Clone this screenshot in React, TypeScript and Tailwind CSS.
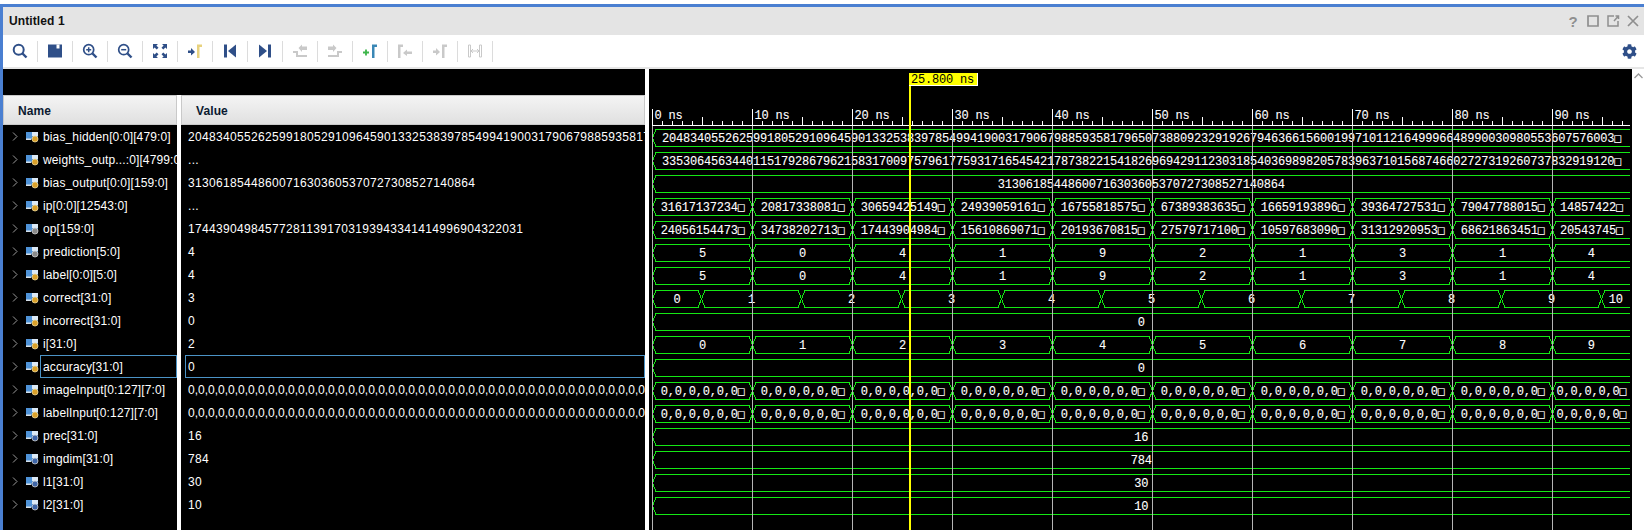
import React from 'react';
import { FaCog } from 'react-icons/fa';

const NAVY = '#2f4f88';
const OFF = '#c9c9c9';

type Kind = 'lock' | 'out' | 'param';

interface Sig {
  name: string;
  value: string;
  kind: Kind;
  active?: boolean;
}

const signals: Sig[] = [
  { name: 'bias_hidden[0:0][479:0]', value: '204834055262599180529109645901332538397854994190031790679885935817965073880923291926794636615600199710112164999664899003098055360757600', kind: 'lock' },
  { name: 'weights_outp...:0][4799:0]', value: '...', kind: 'lock' },
  { name: 'bias_output[0:0][159:0]', value: '31306185448600716303605370727308527140864', kind: 'lock' },
  { name: 'ip[0:0][12543:0]', value: '...', kind: 'lock' },
  { name: 'op[159:0]', value: '174439049845772811391703193943341414996904322031', kind: 'out' },
  { name: 'prediction[5:0]', value: '4', kind: 'out' },
  { name: 'label[0:0][5:0]', value: '4', kind: 'lock' },
  { name: 'correct[31:0]', value: '3', kind: 'lock' },
  { name: 'incorrect[31:0]', value: '0', kind: 'lock' },
  { name: 'i[31:0]', value: '2', kind: 'lock' },
  { name: 'accuracy[31:0]', value: '0', kind: 'lock', active: true },
  { name: 'imageInput[0:127][7:0]', value: '0,0,0,0,0,0,0,0,0,0,0,0,0,0,0,0,0,0,0,0,0,0,0,0,0,0,0,0,0,0,0,0,0,0,0,0,0,0,0,0,0,0,0,0,0,0,0,0,0,0,0,0,0,0', kind: 'lock' },
  { name: 'labelInput[0:127][7:0]', value: '0,0,0,0,0,0,0,0,0,0,0,0,0,0,0,0,0,0,0,0,0,0,0,0,0,0,0,0,0,0,0,0,0,0,0,0,0,0,0,0,0,0,0,0,0,0,0,0,0,0,0,0,0,0', kind: 'lock' },
  { name: 'prec[31:0]', value: '16', kind: 'param' },
  { name: 'imgdim[31:0]', value: '784', kind: 'param' },
  { name: 'l1[31:0]', value: '30', kind: 'param' },
  { name: 'l2[31:0]', value: '10', kind: 'param' },
];

const X0 = 652.5;
const XEND = 1630;
const tens = [0, 1, 2, 3, 4, 5, 6, 7, 8, 9].map((i) => X0 + i * 100);
const decade = [...tens, XEND];
const offset = [X0, ...tens.map((x) => x + 49), XEND];
const whole = [X0, XEND];
const BOX = '\u25A1';
const zeros = `0,0,0,0,0,0${BOX}`;
const zerosEnd = `0,0,0,0,0${BOX}`;

interface Wave {
  edges: number[];
  labels: string[];
  startAt?: number;
}

const waves: Wave[] = [
  { edges: whole, startAt: 662, labels: [`2048340552625991805291096459013325383978549941900317906798859358179650738809232919267946366156001997101121649996648990030980553607576003${BOX}`] },
  { edges: whole, startAt: 662, labels: [`3353064563440115179286796215831700975796177593171654542178738221541826969429112303185403698982057839637101568746602727319260737832919120${BOX}`] },
  { edges: whole, labels: ['31306185448600716303605370727308527140864'] },
  { edges: decade, labels: ['31617137234', '20817338081', '30659425149', '24939059161', '16755818575', '67389383635', '16659193896', '39364727531', '79047788015', '14857422'].map((s) => s + BOX) },
  { edges: decade, labels: ['24056154473', '34738202713', '17443904984', '15610869071', '20193670815', '27579717100', '10597683090', '31312920953', '68621863451', '20543745'].map((s) => s + BOX) },
  { edges: decade, labels: ['5', '0', '4', '1', '9', '2', '1', '3', '1', '4'] },
  { edges: decade, labels: ['5', '0', '4', '1', '9', '2', '1', '3', '1', '4'] },
  { edges: offset, labels: ['0', '1', '2', '3', '4', '5', '6', '7', '8', '9', '10'] },
  { edges: whole, labels: ['0'] },
  { edges: decade, labels: ['0', '1', '2', '3', '4', '5', '6', '7', '8', '9'] },
  { edges: whole, labels: ['0'] },
  { edges: decade, labels: [zeros, zeros, zeros, zeros, zeros, zeros, zeros, zeros, zeros, zerosEnd] },
  { edges: decade, labels: [zeros, zeros, zeros, zeros, zeros, zeros, zeros, zeros, zeros, zerosEnd] },
  { edges: whole, labels: ['16'] },
  { edges: whole, labels: ['784'] },
  { edges: whole, labels: ['30'] },
  { edges: whole, labels: ['10'] },
];

const Glass = ({ mark }: { mark?: 'plus' | 'minus' }) => (
  <svg width="16" height="16" viewBox="0 0 16 16" fill="none" stroke={NAVY}>
    <circle cx="6.7" cy="6.7" r="5" strokeWidth={mark ? 1.7 : 2} />
    <path d="M10.5 10.5 14.5 14.5" strokeWidth="2.4" />
    {mark && <path d={mark === 'plus' ? 'M4.2 6.7h5M6.7 4.2v5' : 'M4.2 6.7h5'} strokeWidth="1.5" />}
  </svg>
);

const Save = () => (
  <svg width="16" height="16" viewBox="0 0 16 16">
    <path d="M1 1.5h14v13H1z" fill={NAVY} />
    <path d="M9.5 1.5h3v4h-3z" fill="#fff" />
  </svg>
);

const Fit = () => (
  <svg width="16" height="16" viewBox="0 0 16 16" fill={NAVY}>
    <path d="M1 1h5L4.4 2.6 6.5 4.7 4.7 6.5 2.6 4.4 1 6z" />
    <path d="M15 1h-5l1.6 1.6-2.1 2.1 1.8 1.8 2.1-2.1L15 6z" />
    <path d="M1 15h5l-1.6-1.6 2.1-2.1-1.8-1.8-2.1 2.1L1 10z" />
    <path d="M15 15h-5l1.6-1.6-2.1-2.1 1.8-1.8 2.1 2.1L15 10z" />
  </svg>
);

// marker bracket with a small arrow in front of it
const Marker = ({ arrow, bar, add }: { arrow: string; bar: string; add?: boolean }) => (
  <svg width="16" height="16" viewBox="0 0 16 16">
    {add ? (
      <path d="M1 9.5h6M4 6.5v6" stroke={arrow} strokeWidth="1.8" />
    ) : (
      <path d="M1 7.5h3V5l4 4-4 3.5V10H1z" fill={arrow} />
    )}
    <path d="M10 15V1.5h5V4h-2.5v11z" fill={bar} />
  </svg>
);

const MarkerBack = () => (
  <svg width="16" height="16" viewBox="0 0 16 16" fill={OFF}>
    <path d="M1 15V1.5h5V4H3.5v11z" />
    <path d="M15 8.5h-5V6.5L6 10l4 3v-2h5z" />
  </svg>
);

const Jump = ({ flip }: { flip?: boolean }) => (
  <svg width="16" height="16" viewBox="0 0 16 16" fill={NAVY} className={flip ? '-scale-x-100' : ''}>
    <path d="M2 1.5h3v13H2z" />
    <path d="M14 1.5v13L6 8z" />
  </svg>
);

const Step = ({ flip }: { flip?: boolean }) => (
  <svg width="16" height="16" viewBox="0 0 16 16" fill={OFF} className={flip ? '-scale-x-100' : ''}>
    <path d="M1 8h5v4h9v2H4v-4H1z" />
    <path d="M6.500 5 10 1.500v2h5V7h-5v2z" />
  </svg>
);

const Span = () => (
  <svg width="16" height="16" viewBox="0 0 16 16" fill="none" stroke={OFF}>
    <path d="M1.500 2v12h2V2zM12.500 2v12h2V2z" />
    <path d="M4 8h8M6 6 4 8l2 2M10 6l2 2-2 2" />
  </svg>
);

const tools = [
  <Glass />,
  <Save />,
  <Glass mark="plus" />,
  <Glass mark="minus" />,
  <Fit />,
  <Marker arrow={NAVY} bar="#e8d27e" />,
  <Jump />,
  <Jump flip />,
  <Step />,
  <Step flip />,
  <Marker add arrow="#3cb54a" bar="#3a87b5" />,
  <MarkerBack />,
  <Marker arrow={OFF} bar={OFF} />,
  <Span />,
];

const SigIcon = ({ kind }: { kind: Kind }) => (
  <svg width="13" height="13" viewBox="0 0 13 13" className="shrink-0">
    <path d="M0 2h12v7.500H0z" fill="#4f93d8" />
    <path d="M6 2h6v4H6z" fill="#dbe9f6" />
    <path d="M0 8.500h5V10H0z" fill="#d5e0ea" />
    <circle
      cx="9"
      cy="9"
      r="3"
      fill={kind === 'lock' ? '#d9a02a' : kind === 'out' ? '#8a8a8a' : '#3f66a8'}
      stroke={kind === 'lock' ? '#efd999' : '#cfcfcf'}
      strokeWidth=".8"
    />
  </svg>
);

const SignalName = ({ sig }: { sig: Sig }) => (
  <div className="flex h-[23px] items-center overflow-hidden whitespace-nowrap">
    <svg width="6" height="9" viewBox="0 0 6 9" fill="none" stroke="#9a9a9a" className="ml-[9px] mr-[8px] shrink-0">
      <path d="M1 .5l4 4-4 4" />
    </svg>
    <SigIcon kind={sig.kind} />
    <div className={`ml-[1px] flex h-full min-w-0 flex-1 items-center pt-[1px] tracking-[0.13px] ${sig.active ? 'border border-[#4b93c6] pl-[2px]' : 'pl-[3px]'}`}>
      {sig.name}
    </div>
  </div>
);

const WaveLabel = ({ label, x, y, anchor }: { label: string; x: number; y: number; anchor: 'start' | 'middle' }) => {
  const boxed = label.endsWith(BOX);
  return (
    <text
      x={x}
      y={y}
      textAnchor={anchor}
      stroke="#fff"
      strokeWidth=".1"
      className="fill-white font-['Liberation_Mono',monospace] text-[12px] tracking-[-0.2px]"
    >
      {boxed ? label.slice(0, -1) : label}
      {boxed && <tspan className="font-['DejaVu_Sans_Mono',monospace] text-[11.500px]">{BOX}</tspan>}
    </text>
  );
};

const WaveRow = ({ wave, top }: { wave: Wave; top: number }) => {
  const t = top + 0.5;
  const b = t + 17;
  const m = t + 8.5;
  return (
    <g>
      {wave.labels.map((label, i) => {
        const x0 = wave.edges[i];
        const x1 = wave.edges[i + 1];
        const open = x1 >= XEND;
        const d = open
          ? `M${x1} ${t}L${x0 + 3.5} ${t}L${x0} ${m}L${x0 + 3.5} ${b}L${x1} ${b}`
          : `M${x0} ${m}L${x0 + 3.5} ${t}L${x1 - 3.5} ${t}L${x1} ${m}L${x1 - 3.5} ${b}L${x0 + 3.5} ${b}Z`;
        return (
          <g key={i}>
            <path d={d} fill="none" stroke="#14e814" shapeRendering="crispEdges" />
            <WaveLabel label={label} x={wave.startAt ?? (x0 + x1) / 2} y={top + 13} anchor={wave.startAt ? 'start' : 'middle'} />
          </g>
        );
      })}
    </g>
  );
};

const WaveCanvas = () => {
  const ticks = Array.from({ length: 98 }, (_, i) => i);
  return (
    <svg width="983" height="461" viewBox="649 69 983 461" className="block">
      {tens.map((x, i) => (
        <WaveLabel key={x} label={`${i * 10} ns`} x={x + 2} y={119} anchor="start" />
      ))}
      <g stroke="#fff" shapeRendering="crispEdges">
        <path d="M652 125.500H1630" />
        {ticks.map((i) => {
          const x = X0 + i * 10;
          const top = i % 10 === 0 ? 109 : i % 5 === 0 ? 117 : 121;
          return <path key={i} d={`M${x} ${top}V125`} />;
        })}
      </g>
      {waves.map((wave, i) => (
        <WaveRow key={i} wave={wave} top={129 + i * 23} />
      ))}
      <g stroke="#b5b5b5" shapeRendering="crispEdges">
        {tens.map((x) => (
          <path key={x} d={`M${x} 126V530`} />
        ))}
      </g>
      <path d="M910 85V530" stroke="#ffff00" strokeWidth="2" shapeRendering="crispEdges" />
      <rect x="909" y="73" width="68" height="12" fill="#ffff00" />
      <path d="M977.500 73V85.500H909" fill="none" stroke="#fff" shapeRendering="crispEdges" />
      <text x="911" y="83" className="fill-black font-['Liberation_Mono',monospace] text-[12px] tracking-[-0.2px]">
        25.800 ns
      </text>
    </svg>
  );
};

const headCls =
  'flex h-[30px] items-center border border-[#c9c9c9] bg-linear-to-b from-[#f4f4f4] to-[#e0e0e0] pl-[14px] pt-[1px] font-bold tracking-[0.1px] text-[#0b1a30]';

export default function App() {
  return (
    <div className="h-[530px] w-[1644px] overflow-hidden bg-white pt-1 font-['Liberation_Sans',Arial,sans-serif] text-[12px]">
      <div className="h-[3px] bg-[#4a7fd1]" />
      <div className="flex h-[523px] flex-col border-l-[3px] border-[#4a7fd1]">
        <div className="flex h-[28px] items-center justify-between bg-[#e4e4e4] pl-[6px] pr-[3px]">
          <span className="font-bold tracking-[0.1px] text-[#111]">Untitled 1</span>
          <div className="flex items-center gap-[4px] text-[#8f8f8f]">
            <span className="w-[16px] text-center text-[15px] font-bold leading-none">?</span>
            <svg width="16" height="16" viewBox="0 0 16 16" fill="none" stroke="currentColor" strokeWidth="1.700">
              <path d="M3 3h10v10H3z" />
            </svg>
            <svg width="16" height="16" viewBox="0 0 16 16" fill="none" stroke="currentColor" strokeWidth="1.500">
              <path d="M9 3H3v10h10V8M9 8l4-4.500M10.500 3h3v3" />
            </svg>
            <svg width="16" height="16" viewBox="0 0 16 16" fill="none" stroke="currentColor" strokeWidth="1.700">
              <path d="M3 3l10 10M13 3 3 13" />
            </svg>
          </div>
        </div>

        <div className="flex h-[32px] items-center justify-between bg-white pr-[7px]">
          <div className="flex items-center">
            {tools.map((icon, i) => (
              <div key={i} className="flex h-[21px] w-[35px] items-center justify-center border-r border-[#dcdcdc]">
                {icon}
              </div>
            ))}
          </div>
          <FaCog size={15} color={NAVY} />
        </div>
        <div className="h-[2px] bg-[#e6e6e6]" />

        <div className="flex min-h-0 flex-1 bg-white">
          <div className="flex w-[642px] flex-col">
            <div className="h-[26px] shrink-0 bg-black" />
            <div className="flex flex-1 gap-[4px] text-white">
              <div className="flex w-[174px] flex-col bg-black">
                <div className={headCls}>Name</div>
                {signals.map((sig) => (
                  <SignalName key={sig.name} sig={sig} />
                ))}
              </div>

              <div className="flex w-[464px] flex-col bg-black">
                <div className={headCls}>Value</div>
                {signals.map((sig) => (
                  <div key={sig.name} className="flex h-[23px] items-center overflow-hidden whitespace-nowrap pl-[4px]">
                    <div
                      className={`flex h-full flex-1 items-center pt-[1px] ${sig.value.includes(',') ? '' : 'tracking-[0.33px]'} ${sig.active ? 'border border-[#4b93c6] pl-[2px]' : 'pl-[3px]'}`}
                    >
                      {sig.value}
                    </div>
                  </div>
                ))}
              </div>
            </div>
          </div>

          <div className="ml-[4px] w-[983px] bg-black">
            <WaveCanvas />
          </div>

          <div className="flex flex-1 justify-center bg-white pt-[4px]">
            <svg width="9" height="6" viewBox="0 0 9 6" fill="none" stroke="#9a9a9a" strokeWidth="1.300">
              <path d="M.5 5 4.500 1l4 4" />
            </svg>
          </div>
        </div>
      </div>
    </div>
  );
}
